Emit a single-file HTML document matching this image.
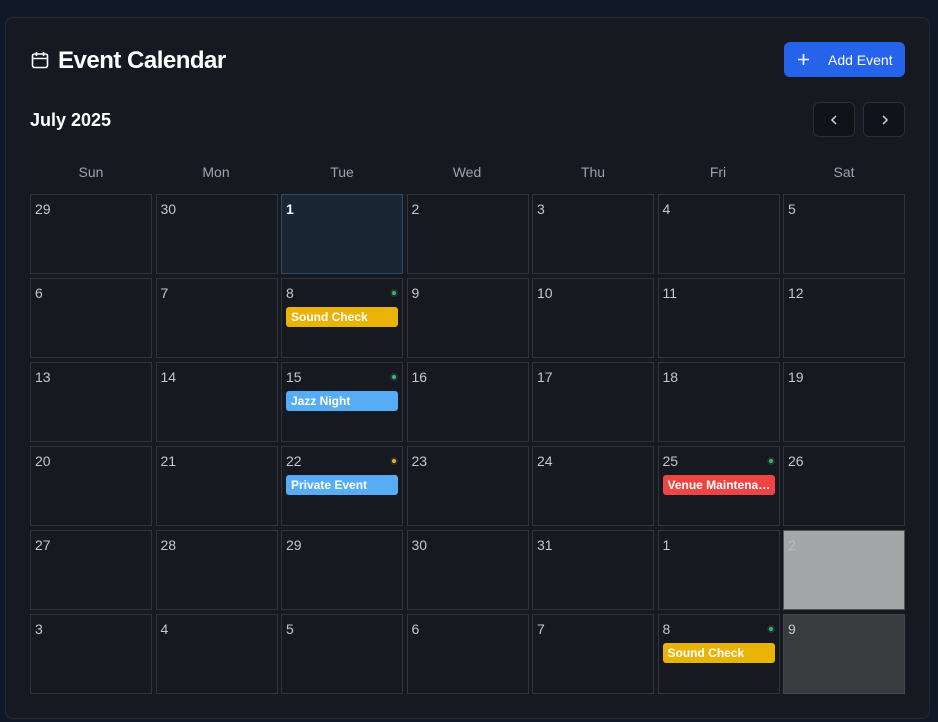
<!DOCTYPE html>
<html><head><style>
*{box-sizing:border-box;margin:0;padding:0}
body{width:938px;height:722px;background:#111827;font-family:"Liberation Sans",sans-serif;overflow:hidden;position:relative}
.card{position:absolute;left:5px;top:17px;width:925px;height:702px;background:#161920;border:1px solid #262b33;border-radius:8px}
.title{position:absolute;left:58px;top:47px;color:#fff;font-size:24px;font-weight:bold;letter-spacing:-0.5px}
.btn{position:absolute;left:784px;top:42px;width:121px;height:35px;background:#2563eb;border-radius:6px;color:#fff;font-size:14px}
.nav{position:absolute;top:102px;width:42px;height:35px;background:#111318;border:1px solid #2a2e36;border-radius:6px}
.month{position:absolute;left:30px;top:110px;color:#fff;font-size:18px;font-weight:600}
.dh{position:absolute;top:164px;width:122px;text-align:center;color:#9ca3af;font-size:14px}
.c{position:absolute;width:122px;height:80px;border:1px solid #30343c;background:#161920}
.n{position:absolute;left:4px;top:6px;color:#c4c7cc;font-size:14px}
.dot{position:absolute;right:4px;top:10px;width:8px;height:8px;border-radius:50%;background:#2a2e36}
.dot i{position:absolute;left:2px;top:2px;width:4px;height:4px;border-radius:50%;background:#22c55e}
.ev{position:absolute;left:4px;top:28px;width:112px;height:20px;border-radius:3px;color:#fff;font-size:12px;font-weight:bold;padding:3px 0 0 5px;white-space:nowrap;overflow:hidden}
</style></head><body>
<div class="card"></div>
<svg style="position:absolute;left:31px;top:51px" width="18" height="18" viewBox="0 0 18 18" fill="none" stroke="#fff" stroke-width="1.6"><rect x="1.5" y="3" width="15" height="13.5" rx="2"/><path d="M1.5 7.5h15M5.5 1v4M12.5 1v4"/></svg>
<div class="title">Event Calendar</div>
<div class="btn"><svg style="position:absolute;left:14px;top:12px" width="11" height="11" viewBox="0 0 11 11" stroke="#fff" stroke-width="1.6"><path d="M5.5 0v11M0 5.5h11"/></svg><span style="position:absolute;left:44px;top:10px">Add Event</span></div>
<div class="nav" style="left:813px"><svg style="position:absolute;left:16px;top:12px" width="8" height="10" viewBox="0 0 8 10" fill="none" stroke="#d1d5db" stroke-width="1.5"><path d="M6 1L2 5l4 4"/></svg></div>
<div class="nav" style="left:863px"><svg style="position:absolute;left:17px;top:12px" width="8" height="10" viewBox="0 0 8 10" fill="none" stroke="#d1d5db" stroke-width="1.5"><path d="M2 1l4 4-4 4"/></svg></div>
<div class="month">July 2025</div>
<div class="dh" style="left:30px">Sun</div><div class="dh" style="left:155px">Mon</div><div class="dh" style="left:281px">Tue</div><div class="dh" style="left:406px">Wed</div><div class="dh" style="left:532px">Thu</div><div class="dh" style="left:657px">Fri</div><div class="dh" style="left:783px">Sat</div>
<div id="g"></div>
<script>
var X=[30,155.5,281,406.5,532,657.5,783],Y=[194,278,362,446,530,614];
var d=[[29,30,1,2,3,4,5],[6,7,8,9,10,11,12],[13,14,15,16,17,18,19],[20,21,22,23,24,25,26],[27,28,29,30,31,1,2],[3,4,5,6,7,8,9]];
var ev={"1,2":["Sound Check","#eab308","#22c55e"],"2,2":["Jazz Night","#56acf5","#22c55e"],"3,2":["Private Event","#56acf5","#eab308"],"3,5":["Venue Maintena…","#ef4444","#22c55e"],"5,5":["Sound Check","#eab308","#22c55e"]};
var h="";
for(var r=0;r<6;r++)for(var c=0;c<7;c++){
var st="left:"+X[c]+"px;top:"+Y[r]+"px;",ns="";
if(r==0&&c==2){st+="background:#1b2635;border-color:#2d4a6a;";ns="color:#fff;font-weight:bold;";}
if(r==4&&c==6){st+="background:#a5a6a8;border-color:#555;";ns="color:#b9bcc2;";}
if(r==5&&c==6){st+="background:#3a3b3f;border-color:#45474c;";}
h+='<div class="c" style="'+st+'"><div class="n" style="'+ns+'">'+d[r][c]+'</div>';
var e=ev[r+","+c];
if(e)h+='<div class="dot"><i style="background:'+e[2]+'"></i></div><div class="ev" style="background:'+e[1]+'">'+e[0]+'</div>';
h+='</div>';}
document.getElementById("g").innerHTML=h;
</script>
</body></html>
